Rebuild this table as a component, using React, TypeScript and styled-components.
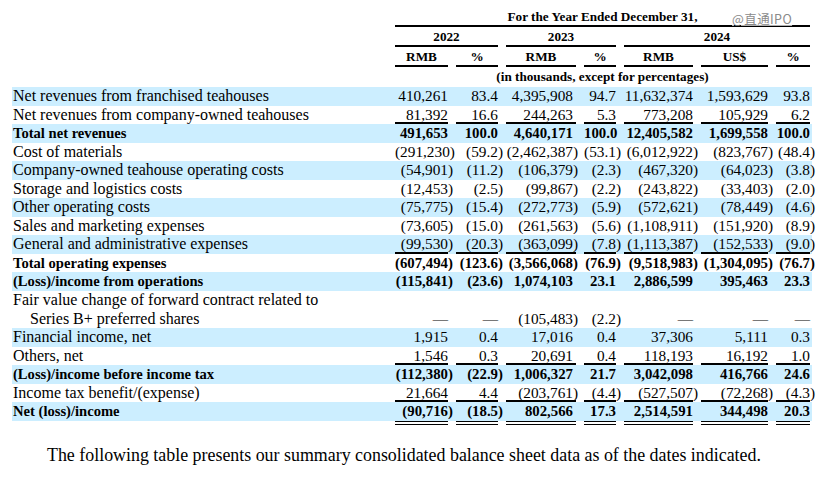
import React from "react";
import styled, { createGlobalStyle } from "styled-components";

const LINE = 18.55;
const COLS = "375px 53px 42px 70px 32px 69px 67px 34px";

type Rule = "single" | "double";

interface LineItem {
  label: React.ReactNode;
  values: string[];
  bold?: boolean;
  rule?: Rule;
  lines?: number;
  hanging?: boolean;
}

const items: LineItem[] = [
  {
    label: "Net revenues from franchised teahouses",
    values: ["410,261", "83.4", "4,395,908", "94.7", "11,632,374", "1,593,629", "93.8"],
  },
  {
    label: "Net revenues from company-owned teahouses",
    values: ["81,392", "16.6", "244,263", "5.3", "773,208", "105,929", "6.2"],
    rule: "single",
  },
  {
    label: "Total net revenues",
    values: ["491,653", "100.0", "4,640,171", "100.0", "12,405,582", "1,699,558", "100.0"],
    bold: true,
  },
  {
    label: "Cost of materials",
    values: ["(291,230)", "(59.2)", "(2,462,387)", "(53.1)", "(6,012,922)", "(823,767)", "(48.4)"],
  },
  {
    label: "Company-owned teahouse operating costs",
    values: ["(54,901)", "(11.2)", "(106,379)", "(2.3)", "(467,320)", "(64,023)", "(3.8)"],
  },
  {
    label: "Storage and logistics costs",
    values: ["(12,453)", "(2.5)", "(99,867)", "(2.2)", "(243,822)", "(33,403)", "(2.0)"],
  },
  {
    label: "Other operating costs",
    values: ["(75,775)", "(15.4)", "(272,773)", "(5.9)", "(572,621)", "(78,449)", "(4.6)"],
  },
  {
    label: "Sales and marketing expenses",
    values: ["(73,605)", "(15.0)", "(261,563)", "(5.6)", "(1,108,911)", "(151,920)", "(8.9)"],
  },
  {
    label: "General and administrative expenses",
    values: ["(99,530)", "(20.3)", "(363,099)", "(7.8)", "(1,113,387)", "(152,533)", "(9.0)"],
    rule: "single",
  },
  {
    label: "Total operating expenses",
    values: ["(607,494)", "(123.6)", "(3,566,068)", "(76.9)", "(9,518,983)", "(1,304,095)", "(76.7)"],
    bold: true,
  },
  {
    label: "(Loss)/income from operations",
    values: ["(115,841)", "(23.6)", "1,074,103", "23.1", "2,886,599", "395,463", "23.3"],
    bold: true,
  },
  {
    label: (
      <>
        Fair value change of forward contract related to
        <br />
        Series B+ preferred shares
      </>
    ),
    values: ["—", "—", "(105,483)", "(2.2)", "—", "—", "—"],
    lines: 2,
    hanging: true,
  },
  {
    label: "Financial income, net",
    values: ["1,915", "0.4", "17,016", "0.4", "37,306", "5,111", "0.3"],
  },
  {
    label: "Others, net",
    values: ["1,546", "0.3", "20,691", "0.4", "118,193", "16,192", "1.0"],
    rule: "single",
  },
  {
    label: "(Loss)/income before income tax",
    values: ["(112,380)", "(22.9)", "1,006,327", "21.7", "3,042,098", "416,766", "24.6"],
    bold: true,
  },
  {
    label: "Income tax benefit/(expense)",
    values: ["21,664", "4.4", "(203,761)", "(4.4)", "(527,507)", "(72,268)", "(4.3)"],
    rule: "single",
  },
  {
    label: "Net (loss)/income",
    values: ["(90,716)", "(18.5)", "802,566", "17.3", "2,514,591", "344,498", "20.3"],
    bold: true,
    rule: "double",
  },
];

const units = ["RMB", "%", "RMB", "%", "RMB", "US$", "%"];

// digits right-align; a closing paren hangs past the column edge
const renderValue = (v: string) => {
  if (v.startsWith("(") && v.endsWith(")")) {
    return (
      <>
        {v.slice(0, -1)}
        <Paren>)</Paren>
      </>
    );
  }
  return v;
};

const App = () => {
  return (
    <Page>
      <GlobalStyle />
      <Watermark>@直通IPO</Watermark>
      <Table>
        <HeadRow>
          <span />
          <HeadCell $span={7} $ruled>
            For the Year Ended December 31,
          </HeadCell>
        </HeadRow>
        <HeadRow>
          <span />
          <HeadCell $span={2} $ruled>
            2022
          </HeadCell>
          <HeadCell $span={2} $ruled>
            2023
          </HeadCell>
          <HeadCell $span={3} $ruled>
            2024
          </HeadCell>
        </HeadRow>
        <HeadRow>
          <span />
          {units.map((u, i) => (
            <HeadCell key={i} $span={1} $ruled>
              {u}
            </HeadCell>
          ))}
        </HeadRow>
        <HeadRow>
          <span />
          <HeadCell $span={7}>(in thousands, except for percentages)</HeadCell>
        </HeadRow>
        {items.map((item, idx) => (
          <Row
            key={idx}
            $shaded={idx % 2 === 0}
            $lines={item.lines || 1}
            $bold={!!item.bold}
          >
            <Label $hanging={!!item.hanging} $bold={!!item.bold}>
              {item.label}
            </Label>
            {item.values.map((v, i) => (
              <Value
                key={i}
                $rule={item.rule}
                $pad={i === 2 ? 3 : 0}
                $bold={!!item.bold}
              >
                {renderValue(v)}
              </Value>
            ))}
          </Row>
        ))}
      </Table>
      <Note>
        The following table presents our summary consolidated balance sheet
        data as of the dates indicated.
      </Note>
    </Page>
  );
};

export default App;

const GlobalStyle = createGlobalStyle`
  html, body {
    margin: 0;
    padding: 0;
    background: #ffffff;
  }
  body {
    font-family: "Liberation Serif", "Times New Roman", serif;
    font-size: 16px;
    color: #000;
  }
`;

const Page = styled.div`
  position: relative;
  display: flex;
  flex-direction: column;
  width: 828px;
  height: 480px;
  padding-top: 7px;
  box-sizing: border-box;
  overflow: hidden;
`;

const Watermark = styled.div`
  position: absolute;
  left: 732px;
  top: 12px;
  font-family: "Noto Sans CJK SC", "DejaVu Sans", sans-serif;
  font-size: 12.5px;
  line-height: 14px;
  color: #8a8a8a;
  text-decoration: underline;
  text-decoration-color: #b0b0b0;
  letter-spacing: 0.4px;
`;

const Table = styled.div`
  flex: none;
  margin-left: 12px;
  width: 800px;
`;

const HeadRow = styled.div`
  display: grid;
  grid-template-columns: ${COLS};
  column-gap: 8px;
  height: 20px;
`;

const HeadCell = styled.div<{ $span: number; $ruled?: boolean }>`
  grid-column: span ${({ $span }) => $span};
  box-sizing: border-box;
  height: 20px;
  line-height: 19px;
  font-size: 13.2px;
  font-weight: bold;
  text-align: center;
  white-space: nowrap;
  border-bottom: ${({ $ruled }) => ($ruled ? "2px solid #000" : "none")};
`;

const Row = styled.div<{ $shaded: boolean; $lines: number; $bold: boolean }>`
  display: grid;
  grid-template-columns: ${COLS};
  column-gap: 8px;
  padding-right: 2px;
  height: ${({ $lines }) => $lines * LINE}px;
  background: ${({ $shaded }) => ($shaded ? "#cceeff" : "transparent")};
  font-weight: ${({ $bold }) => ($bold ? "bold" : "normal")};
`;

const Label = styled.div<{ $hanging: boolean; $bold: boolean }>`
  align-self: start;
  font-size: ${({ $bold }) => ($bold ? 14.6 : 16)}px;
  line-height: ${LINE}px;
  white-space: nowrap;
  padding-left: ${({ $hanging }) => ($hanging ? 18 : 1)}px;
  text-indent: ${({ $hanging }) => ($hanging ? -17 : 0)}px;
`;

const Value = styled.div<{ $rule?: Rule; $pad: number; $bold: boolean }>`
  align-self: end;
  box-sizing: ${({ $rule }) => ($rule === "double" ? "content-box" : "border-box")};
  height: ${LINE}px;
  font-size: ${({ $bold }) => ($bold ? 14.8 : 15.3)}px;
  line-height: ${LINE}px;
  text-align: right;
  white-space: nowrap;
  padding-right: ${({ $pad }) => $pad}px;
  border-bottom: ${({ $rule }) =>
    $rule === "single"
      ? "2px solid #000"
      : $rule === "double"
      ? "4px double #000"
      : "none"};
`;

const Paren = styled.span`
  display: inline-block;
  margin-right: -0.333em;
`;

const Note = styled.div`
  flex: none;
  margin-top: auto;
  padding: 0 0 15px 47px;
  font-size: 17.9px;
  line-height: 19px;
  white-space: nowrap;
`;
